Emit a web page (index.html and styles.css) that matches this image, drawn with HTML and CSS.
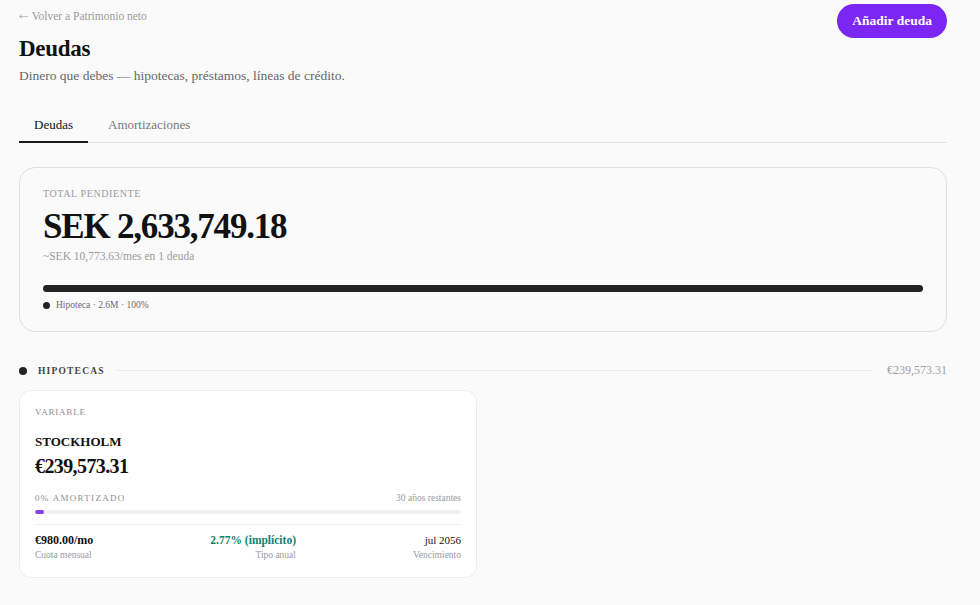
FILE: index.html
```html
<!DOCTYPE html>
<html lang="es">
<head>
    <meta charset="UTF-8">
    <meta name="viewport" content="width=device-width, initial-scale=1.0">
    <title>Deudas</title>
    <link rel="stylesheet" href="styles.css">
</head>
<body>
    <div class="page">
        <div class="top">
            <div>
                <a class="back" href="#"><span class="arrow">&larr;</span> Volver a Patrimonio neto</a>
                <h1>Deudas</h1>
                <p class="lead">Dinero que debes &mdash; hipotecas, préstamos, líneas de crédito.</p>
            </div>
            <button class="add">Añadir deuda</button>
        </div>

        <div class="tabs">
            <a class="tab active" href="#">Deudas</a>
            <a class="tab" href="#">Amortizaciones</a>
        </div>

        <div class="summary">
            <div class="label">Total pendiente</div>
            <div class="total">SEK 2,633,749.18</div>
            <div class="monthly">~SEK 10,773.63/mes en 1 deuda</div>
            <div class="split">
                <div class="split-part" style="width:100%"></div>
            </div>
            <div class="legend"><span class="dot"></span>Hipoteca · 2.6M · 100%</div>
        </div>

        <div class="group">
            <span class="dot big"></span>
            <span class="group-name">Hipotecas</span>
            <span class="group-line"></span>
            <span class="group-total">€239,573.31</span>
        </div>

        <div class="cards">
            <div class="debt">
                <div class="kind">Variable</div>
                <div class="name">STOCKHOLM</div>
                <div class="amount">€239,573.31</div>
                <div class="progress-head">
                    <span class="paid">0% amortizado</span>
                    <span class="left">30 años restantes</span>
                </div>
                <div class="progress"><div class="fill" style="width:2%"></div></div>
                <div class="stats">
                    <div class="stat">
                        <div class="val">€980.00/mo</div>
                        <div class="cap">Cuota mensual</div>
                    </div>
                    <div class="stat mid">
                        <div class="val green">2.77% (implícito)</div>
                        <div class="cap">Tipo anual</div>
                    </div>
                    <div class="stat end">
                        <div class="val plain">jul 2056</div>
                        <div class="cap">Vencimiento</div>
                    </div>
                </div>
            </div>
        </div>
    </div>
</body>
</html>
```

FILE: styles.css
```css
*{
    margin: 0;
    padding: 0;
    box-sizing: border-box;
}
body{
    background-color: #fafafa;
    font-family: "Liberation Serif", "Times New Roman", serif;
    color: #111;
}
.page{
    width: 928px;
    margin-left: 19px;
}
.top{
    display: flex;
    justify-content: space-between;
    align-items: flex-start;
}
.back{
    display: block;
    margin-top: 9px;
    font-size: 11.5px;
    line-height: 14px;
    color: #9a9a9e;
    text-decoration: none;
}
.arrow{
    font-family: "DejaVu Sans", sans-serif;
    font-size: 12px;
    font-weight: 300;
}
h1{
    margin-top: 12px;
    font-size: 23px;
    line-height: 28px;
    letter-spacing: -0.3px;
}
.lead{
    margin-top: 5px;
    font-size: 13.5px;
    color: #66666c;
}
.add{
    margin-top: 4px;
    height: 34px;
    padding: 0 15px;
    border: none;
    border-radius: 17px;
    background-color: #7b26f2;
    color: #fff;
    font-family: inherit;
    font-size: 13.5px;
    font-weight: bold;
    cursor: pointer;
}
.tabs{
    display: flex;
    margin-top: 33px;
    border-bottom: 1px solid #e4e4e6;
}
.tab{
    padding: 0 15px 8px;
    font-size: 13px;
    line-height: 16px;
    color: #77777d;
    text-decoration: none;
    border-bottom: 2px solid transparent;
    margin-bottom: -1px;
    margin-right: 5px;
}
.tab.active{
    color: #111;
    border-bottom-color: #1a1a1a;
}
.summary{
    margin-top: 24px;
    padding: 20px 23px 21px;
    border: 1px solid #e0e0e2;
    border-radius: 16px;
}
.label{
    font-size: 10px;
    letter-spacing: 0.6px;
    text-transform: uppercase;
    color: #9a9aa0;
}
.total{
    margin-top: 8px;
    font-size: 35px;
    line-height: 40px;
    font-weight: bold;
    letter-spacing: -1.2px;
}
.monthly{
    margin-top: 3px;
    font-size: 11.5px;
    color: #9a9aa0;
}
.split{
    margin-top: 23px;
    height: 7px;
    border-radius: 4px;
    background-color: #eee;
    overflow: hidden;
}
.split-part{
    height: 100%;
    background-color: #232325;
}
.legend{
    display: flex;
    align-items: center;
    margin-top: 8px;
    font-size: 9.5px;
    color: #6a6a70;
}
.dot{
    width: 7px;
    height: 7px;
    border-radius: 50%;
    background-color: #232325;
    margin-right: 6px;
}
.group{
    display: flex;
    align-items: center;
    margin-top: 31px;
}
.dot.big{
    width: 8px;
    height: 8px;
    margin-right: 11px;
}
.group-name{
    font-size: 9.5px;
    font-weight: bold;
    letter-spacing: 1.2px;
    text-transform: uppercase;
    color: #444449;
}
.group-line{
    flex: 1;
    height: 1px;
    background-color: #ececee;
    margin: 0 15px 0 11px;
}
.group-total{
    font-size: 12px;
    color: #a0a0a6;
}
.cards{
    display: grid;
    grid-template-columns: 1fr 1fr;
    gap: 12px;
    margin-top: 12px;
}
.debt{
    background-color: #fff;
    border: 1px solid #ececee;
    border-radius: 12px;
    padding: 16px 15px 17px;
}
.kind{
    font-size: 9px;
    letter-spacing: 0.8px;
    text-transform: uppercase;
    color: #8e8e94;
}
.name{
    margin-top: 17px;
    font-size: 13px;
    font-weight: bold;
}
.amount{
    margin-top: 5px;
    font-size: 20px;
    font-weight: bold;
    letter-spacing: -0.6px;
}
.progress-head{
    display: flex;
    justify-content: space-between;
    align-items: baseline;
    margin-top: 15px;
}
.paid{
    font-size: 9px;
    letter-spacing: 1.3px;
    text-transform: uppercase;
    color: #8e8e94;
}
.left{
    font-size: 9.5px;
    color: #9a9aa0;
}
.progress{
    margin-top: 7px;
    height: 4px;
    border-radius: 2px;
    background-color: #f1f1f3;
    overflow: hidden;
}
.fill{
    height: 100%;
    border-radius: 2px;
    background-color: #8b3cf5;
}
.stats{
    display: flex;
    justify-content: space-between;
    margin-top: 10px;
    padding-top: 7px;
    border-top: 1px solid #f0f0f2;
}
.stat.mid, .stat.end{
    text-align: right;
}
.val{
    font-size: 12px;
    line-height: 16px;
    font-weight: bold;
}
.val.plain{
    font-weight: normal;
    font-size: 11px;
}
.val.green{
    color: #15806e;
    font-size: 11.5px;
}
.cap{
    margin-top: 2px;
    font-size: 9.5px;
    color: #9a9aa0;
}
```
